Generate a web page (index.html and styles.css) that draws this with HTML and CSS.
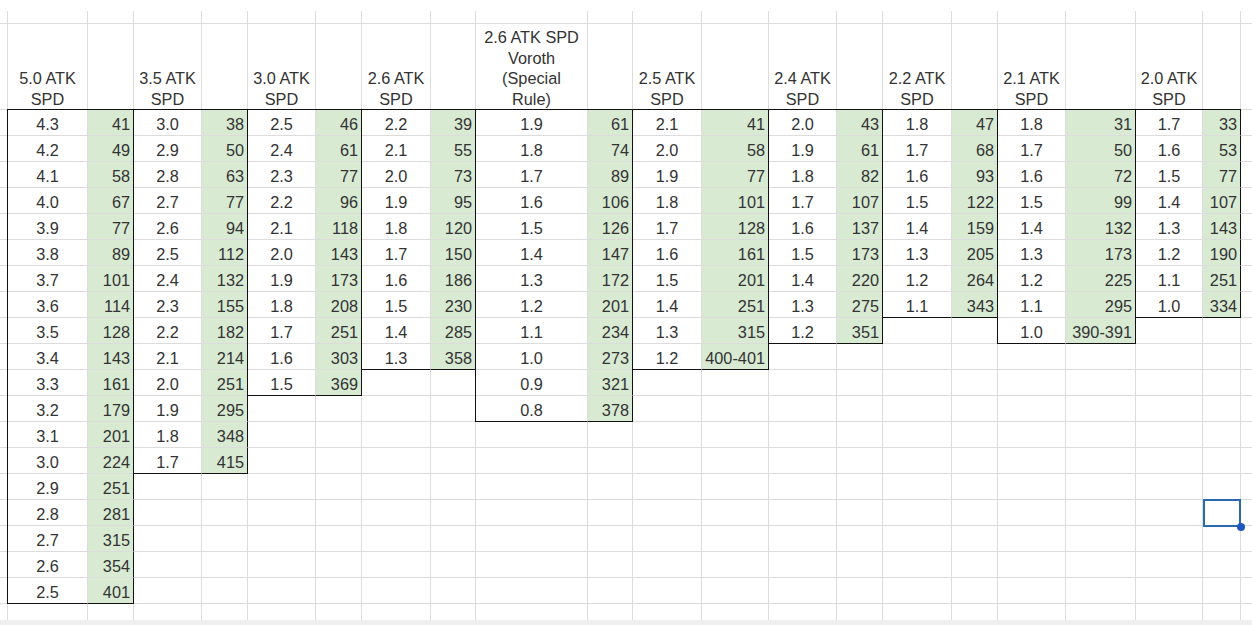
FILE: index.html
```html
<!DOCTYPE html>
<html>
<head>
<meta charset="utf-8">
<title>ATK SPD table</title>
<link rel="stylesheet" href="styles.css">
</head>
<body>
<div class="sheet">
  <div class="col edge">
    <div class="t"></div><div class="h"></div><div class="f"></div>
  </div>

  <div class="group g1">
    <div class="hr"><div class="t a"></div><div class="t b"></div></div>
    <div class="hr"><div class="h a">5.0 ATK<br>SPD</div><div class="h b"></div></div>
    <div class="data">
      <div class="row"><span class="a">4.3</span><span class="b">41</span></div>
      <div class="row"><span class="a">4.2</span><span class="b">49</span></div>
      <div class="row"><span class="a">4.1</span><span class="b">58</span></div>
      <div class="row"><span class="a">4.0</span><span class="b">67</span></div>
      <div class="row"><span class="a">3.9</span><span class="b">77</span></div>
      <div class="row"><span class="a">3.8</span><span class="b">89</span></div>
      <div class="row"><span class="a">3.7</span><span class="b">101</span></div>
      <div class="row"><span class="a">3.6</span><span class="b">114</span></div>
      <div class="row"><span class="a">3.5</span><span class="b">128</span></div>
      <div class="row"><span class="a">3.4</span><span class="b">143</span></div>
      <div class="row"><span class="a">3.3</span><span class="b">161</span></div>
      <div class="row"><span class="a">3.2</span><span class="b">179</span></div>
      <div class="row"><span class="a">3.1</span><span class="b">201</span></div>
      <div class="row"><span class="a">3.0</span><span class="b">224</span></div>
      <div class="row"><span class="a">2.9</span><span class="b">251</span></div>
      <div class="row"><span class="a">2.8</span><span class="b">281</span></div>
      <div class="row"><span class="a">2.7</span><span class="b">315</span></div>
      <div class="row"><span class="a">2.6</span><span class="b">354</span></div>
      <div class="row"><span class="a">2.5</span><span class="b">401</span></div>
    </div>
    <div class="fill"><div class="a"></div><div class="b"></div></div>
  </div>

  <div class="group g2">
    <div class="hr"><div class="t a"></div><div class="t b"></div></div>
    <div class="hr"><div class="h a">3.5 ATK<br>SPD</div><div class="h b"></div></div>
    <div class="data">
      <div class="row"><span class="a">3.0</span><span class="b">38</span></div>
      <div class="row"><span class="a">2.9</span><span class="b">50</span></div>
      <div class="row"><span class="a">2.8</span><span class="b">63</span></div>
      <div class="row"><span class="a">2.7</span><span class="b">77</span></div>
      <div class="row"><span class="a">2.6</span><span class="b">94</span></div>
      <div class="row"><span class="a">2.5</span><span class="b">112</span></div>
      <div class="row"><span class="a">2.4</span><span class="b">132</span></div>
      <div class="row"><span class="a">2.3</span><span class="b">155</span></div>
      <div class="row"><span class="a">2.2</span><span class="b">182</span></div>
      <div class="row"><span class="a">2.1</span><span class="b">214</span></div>
      <div class="row"><span class="a">2.0</span><span class="b">251</span></div>
      <div class="row"><span class="a">1.9</span><span class="b">295</span></div>
      <div class="row"><span class="a">1.8</span><span class="b">348</span></div>
      <div class="row"><span class="a">1.7</span><span class="b">415</span></div>
    </div>
    <div class="fill"><div class="a"></div><div class="b"></div></div>
  </div>

  <div class="group g3">
    <div class="hr"><div class="t a"></div><div class="t b"></div></div>
    <div class="hr"><div class="h a">3.0 ATK<br>SPD</div><div class="h b"></div></div>
    <div class="data">
      <div class="row"><span class="a">2.5</span><span class="b">46</span></div>
      <div class="row"><span class="a">2.4</span><span class="b">61</span></div>
      <div class="row"><span class="a">2.3</span><span class="b">77</span></div>
      <div class="row"><span class="a">2.2</span><span class="b">96</span></div>
      <div class="row"><span class="a">2.1</span><span class="b">118</span></div>
      <div class="row"><span class="a">2.0</span><span class="b">143</span></div>
      <div class="row"><span class="a">1.9</span><span class="b">173</span></div>
      <div class="row"><span class="a">1.8</span><span class="b">208</span></div>
      <div class="row"><span class="a">1.7</span><span class="b">251</span></div>
      <div class="row"><span class="a">1.6</span><span class="b">303</span></div>
      <div class="row"><span class="a">1.5</span><span class="b">369</span></div>
    </div>
    <div class="fill"><div class="a"></div><div class="b"></div></div>
  </div>

  <div class="group g4">
    <div class="hr"><div class="t a"></div><div class="t b"></div></div>
    <div class="hr"><div class="h a">2.6 ATK<br>SPD</div><div class="h b"></div></div>
    <div class="data">
      <div class="row"><span class="a">2.2</span><span class="b">39</span></div>
      <div class="row"><span class="a">2.1</span><span class="b">55</span></div>
      <div class="row"><span class="a">2.0</span><span class="b">73</span></div>
      <div class="row"><span class="a">1.9</span><span class="b">95</span></div>
      <div class="row"><span class="a">1.8</span><span class="b">120</span></div>
      <div class="row"><span class="a">1.7</span><span class="b">150</span></div>
      <div class="row"><span class="a">1.6</span><span class="b">186</span></div>
      <div class="row"><span class="a">1.5</span><span class="b">230</span></div>
      <div class="row"><span class="a">1.4</span><span class="b">285</span></div>
      <div class="row"><span class="a">1.3</span><span class="b">358</span></div>
    </div>
    <div class="fill"><div class="a"></div><div class="b"></div></div>
  </div>

  <div class="group g5">
    <div class="hr"><div class="t a"></div><div class="t b"></div></div>
    <div class="hr"><div class="h a">2.6 ATK SPD<br>Voroth<br>(Special<br>Rule)</div><div class="h b"></div></div>
    <div class="data">
      <div class="row"><span class="a">1.9</span><span class="b">61</span></div>
      <div class="row"><span class="a">1.8</span><span class="b">74</span></div>
      <div class="row"><span class="a">1.7</span><span class="b">89</span></div>
      <div class="row"><span class="a">1.6</span><span class="b">106</span></div>
      <div class="row"><span class="a">1.5</span><span class="b">126</span></div>
      <div class="row"><span class="a">1.4</span><span class="b">147</span></div>
      <div class="row"><span class="a">1.3</span><span class="b">172</span></div>
      <div class="row"><span class="a">1.2</span><span class="b">201</span></div>
      <div class="row"><span class="a">1.1</span><span class="b">234</span></div>
      <div class="row"><span class="a">1.0</span><span class="b">273</span></div>
      <div class="row"><span class="a">0.9</span><span class="b">321</span></div>
      <div class="row"><span class="a">0.8</span><span class="b">378</span></div>
    </div>
    <div class="fill"><div class="a"></div><div class="b"></div></div>
  </div>

  <div class="group g6">
    <div class="hr"><div class="t a"></div><div class="t b"></div></div>
    <div class="hr"><div class="h a">2.5 ATK<br>SPD</div><div class="h b"></div></div>
    <div class="data">
      <div class="row"><span class="a">2.1</span><span class="b">41</span></div>
      <div class="row"><span class="a">2.0</span><span class="b">58</span></div>
      <div class="row"><span class="a">1.9</span><span class="b">77</span></div>
      <div class="row"><span class="a">1.8</span><span class="b">101</span></div>
      <div class="row"><span class="a">1.7</span><span class="b">128</span></div>
      <div class="row"><span class="a">1.6</span><span class="b">161</span></div>
      <div class="row"><span class="a">1.5</span><span class="b">201</span></div>
      <div class="row"><span class="a">1.4</span><span class="b">251</span></div>
      <div class="row"><span class="a">1.3</span><span class="b">315</span></div>
      <div class="row"><span class="a">1.2</span><span class="b">400-401</span></div>
    </div>
    <div class="fill"><div class="a"></div><div class="b"></div></div>
  </div>

  <div class="group g7">
    <div class="hr"><div class="t a"></div><div class="t b"></div></div>
    <div class="hr"><div class="h a">2.4 ATK<br>SPD</div><div class="h b"></div></div>
    <div class="data">
      <div class="row"><span class="a">2.0</span><span class="b">43</span></div>
      <div class="row"><span class="a">1.9</span><span class="b">61</span></div>
      <div class="row"><span class="a">1.8</span><span class="b">82</span></div>
      <div class="row"><span class="a">1.7</span><span class="b">107</span></div>
      <div class="row"><span class="a">1.6</span><span class="b">137</span></div>
      <div class="row"><span class="a">1.5</span><span class="b">173</span></div>
      <div class="row"><span class="a">1.4</span><span class="b">220</span></div>
      <div class="row"><span class="a">1.3</span><span class="b">275</span></div>
      <div class="row"><span class="a">1.2</span><span class="b">351</span></div>
    </div>
    <div class="fill"><div class="a"></div><div class="b"></div></div>
  </div>

  <div class="group g8">
    <div class="hr"><div class="t a"></div><div class="t b"></div></div>
    <div class="hr"><div class="h a">2.2 ATK<br>SPD</div><div class="h b"></div></div>
    <div class="data">
      <div class="row"><span class="a">1.8</span><span class="b">47</span></div>
      <div class="row"><span class="a">1.7</span><span class="b">68</span></div>
      <div class="row"><span class="a">1.6</span><span class="b">93</span></div>
      <div class="row"><span class="a">1.5</span><span class="b">122</span></div>
      <div class="row"><span class="a">1.4</span><span class="b">159</span></div>
      <div class="row"><span class="a">1.3</span><span class="b">205</span></div>
      <div class="row"><span class="a">1.2</span><span class="b">264</span></div>
      <div class="row"><span class="a">1.1</span><span class="b">343</span></div>
    </div>
    <div class="fill"><div class="a"></div><div class="b"></div></div>
  </div>

  <div class="group g9">
    <div class="hr"><div class="t a"></div><div class="t b"></div></div>
    <div class="hr"><div class="h a">2.1 ATK<br>SPD</div><div class="h b"></div></div>
    <div class="data">
      <div class="row"><span class="a">1.8</span><span class="b">31</span></div>
      <div class="row"><span class="a">1.7</span><span class="b">50</span></div>
      <div class="row"><span class="a">1.6</span><span class="b">72</span></div>
      <div class="row"><span class="a">1.5</span><span class="b">99</span></div>
      <div class="row"><span class="a">1.4</span><span class="b">132</span></div>
      <div class="row"><span class="a">1.3</span><span class="b">173</span></div>
      <div class="row"><span class="a">1.2</span><span class="b">225</span></div>
      <div class="row"><span class="a">1.1</span><span class="b">295</span></div>
      <div class="row"><span class="a">1.0</span><span class="b">390-391</span></div>
    </div>
    <div class="fill"><div class="a"></div><div class="b"></div></div>
  </div>

  <div class="group g10">
    <div class="hr"><div class="t a"></div><div class="t b"></div></div>
    <div class="hr"><div class="h a">2.0 ATK<br>SPD</div><div class="h b"></div></div>
    <div class="data">
      <div class="row"><span class="a">1.7</span><span class="b">33</span></div>
      <div class="row"><span class="a">1.6</span><span class="b">53</span></div>
      <div class="row"><span class="a">1.5</span><span class="b">77</span></div>
      <div class="row"><span class="a">1.4</span><span class="b">107</span></div>
      <div class="row"><span class="a">1.3</span><span class="b">143</span></div>
      <div class="row"><span class="a">1.2</span><span class="b">190</span></div>
      <div class="row"><span class="a">1.1</span><span class="b">251</span></div>
      <div class="row"><span class="a">1.0</span><span class="b">334</span></div>
    </div>
    <div class="fill"><div class="a"></div><div class="b"></div></div>
  </div>

  <div class="col last">
    <div class="t"></div><div class="h"></div><div class="f"></div>
  </div>

  <div class="sel"><span class="handle"></span></div>
</div>
<div class="hbar"></div>
</body>
</html>
```

FILE: styles.css
```css
* { box-sizing: border-box; }

html, body {
  margin: 0;
  padding: 0;
  background: #ffffff;
  overflow: hidden;
}

body {
  font-family: "Liberation Sans", Arial, sans-serif;
  font-size: 16.3px;
  color: #333333;
}

.sheet {
  position: relative;
  display: flex;
  height: 620px;
  padding-top: 11px;
  overflow: hidden;
  width: 1300px;
}

.col, .group {
  flex: none;
  display: flex;
  flex-direction: column;
}

.edge { width: 8px; }
.last { width: 100px; }

.g1 { --a: 80px; --b: 46px; }
.g2 { --a: 68px; --b: 46px; }
.g3 { --a: 68px; --b: 46px; }
.g4 { --a: 69px; --b: 45px; }
.g5 { --a: 112px; --b: 45px; }
.g6 { --a: 69px; --b: 67px; }
.g7 { --a: 68px; --b: 46px; }
.g8 { --a: 69px; --b: 46px; }
.g9 { --a: 68px; --b: 70px; }
.g10 { --a: 67px; --b: 38px; }

.group { width: calc(var(--a) + var(--b)); }

.hr { display: flex; }

.group .a { width: var(--a); flex: none; }
.group .b { flex: 1; }

.t {
  height: 13px;
  border-right: 1px solid #dcdcdc;
  border-bottom: 1px solid #dcdcdc;
}

.h {
  height: 86px;
  border-right: 1px solid #dcdcdc;
  border-bottom: 1px solid #dcdcdc;
  display: flex;
  flex-direction: column;
  justify-content: flex-end;
  text-align: center;
  line-height: 20.5px;
  padding-bottom: 0;
}

.f, .fill > div {
  flex: 1;
  border-right: 1px solid #dcdcdc;
  background-image: repeating-linear-gradient(to bottom, #ffffff 0, #ffffff 25px, #dcdcdc 25px, #dcdcdc 26px);
}

.fill {
  flex: 1;
  display: flex;
}

.data {
  margin: -1px 0 0 -1px;
  border-left: 1px solid #111111;
  border-top: 1px solid #111111;
}

.row {
  display: flex;
  height: 26px;
}

.row > span {
  display: block;
  height: 26px;
  line-height: 25px;
  padding-top: 2px;
  border-bottom: 1px solid #dcdcdc;
  white-space: nowrap;
}

.row > .a {
  text-align: center;
  border-right: 1px solid #dcdcdc;
  background: #ffffff;
}

.row > .b {
  text-align: right;
  padding-right: 3px;
  background: #d9ead3;
  border-right: 1px solid #111111;
}

.row:last-child > span {
  border-bottom-color: #111111;
}

.sel {
  position: absolute;
  left: 1203px;
  top: 499px;
  width: 38px;
  height: 28px;
  border: 2px solid #2c68ad;
}

.handle {
  position: absolute;
  right: -6px;
  bottom: -6px;
  width: 8px;
  height: 8px;
  border-radius: 50%;
  background: #1f57c3;
}

.hbar {
  height: 5px;
  background: #efefef;
}
```
